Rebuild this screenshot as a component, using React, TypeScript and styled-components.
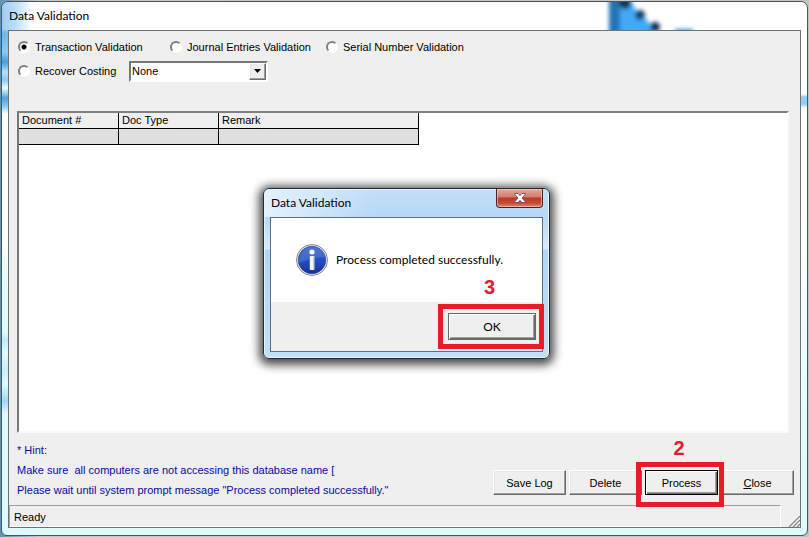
import React from "react";
import styled, { createGlobalStyle, css } from "styled-components";

const GlobalStyle = createGlobalStyle`
  * { box-sizing: border-box; }
  body {
    margin: 0;
    font-family: "Liberation Sans", Arial, sans-serif;
    font-size: 11px;
    line-height: 16px;
    color: #000;
  }
`;

const uiFont = `Lato, "Open Sans", sans-serif`;

const Desktop = styled.div`
  position: relative;
  display: flex;
  min-height: 100vh;
  padding: 1px;
  background: linear-gradient(90deg, #5d93b4 0, #c4c8ca 40px, #c4c4c4 100%);
`;

const Window = styled.main`
  position: relative;
  display: flex;
  flex: 1;
  flex-direction: column;
  padding: 0 6px 7px;
  border: 1px solid #4f5456;
  border-radius: 7px 7px 6px 6px;
  overflow: hidden;
  background:
    linear-gradient(transparent 92px, #8fcdf5 95px, #8fcdf5 102px, transparent 106px) right / 6px 100% no-repeat,
    linear-gradient(
      #9ccdf0 0, #cfe9fb 18px, #6cb8ee 32px, #8ccaf5 50px, #3f9fe4 60px, #b5dffb 70px,
      #8cc8f3 78px, #eefaff 86px, #4aa4e2 96px, #8cc8f3 104px, #fff 112px, #fff 240px,
      #e4fcfe 290px, #e0fbfe 330px, #bfeafd 338px, #e0fbfe 350px, #c6eefd 368px,
      #e0fbfe 382px, #9ed8f6 399px, #e0fbfe 412px, #e0fbfe 100%
    ) left / 6px 100% no-repeat,
    linear-gradient(#fff 0, #fff 200px, #e3fbfd 430px, #e0f9fb 100%);
`;

const TitleBar = styled.header`
  position: relative;
  display: flex;
  align-items: center;
  height: 28px;
  font: 12px/18px ${uiFont};
  background: linear-gradient(90deg, #9dccf0 0, #c4e2f8 16px, #fff 30px);
  margin-left: -6px;
  padding-left: 7px;
`;

const TitleText = styled.h1`
  margin: 0;
  font: inherit;
  position: relative;
`;

const Glow = styled.svg`
  position: absolute;
  left: 75%;
  top: 0;
  width: 100px;
  height: 28px;
`;

const Client = styled.div`
  display: flex;
  flex: 1;
  flex-direction: column;
  border: 1px solid #697378;
  background: #efefef;
`;

const Form = styled.form`
  display: flex;
  flex: 1;
  flex-direction: column;
  padding: 4px 11px 0 8px;
`;

const OptionRow = styled.div`
  display: flex;
  align-items: center;
  height: 24px;
  padding-left: 1px;
`;

const Option = styled.label<{ $width: number }>`
  display: flex;
  align-items: center;
  gap: 5px;
  width: ${(p) => p.$width}px;
  white-space: nowrap;
`;

const Radio = styled.input`
  appearance: none;
  flex: none;
  width: 12px;
  height: 12px;
  margin: 0;
  border: 2px solid;
  border-color: #808080 #fff #fff #808080;
  border-radius: 50%;
  background: #fff;
  &:checked {
    background: radial-gradient(circle, #000 0, #000 2px, #fff 3px);
  }
`;

const Combo = styled.div`
  position: relative;
  display: flex;
  width: 139px;
  height: 21px;
  border: 2px solid;
  border-color: #777 #fff #fff #777;
`;

const Select = styled.select`
  appearance: none;
  width: 100%;
  padding: 0 18px 0 1px;
  border: 0;
  border-radius: 0;
  background: #fff;
  color: #000;
  font: inherit;
`;

const bevel = css`
  border: 1px solid;
  border-color: #fff #696969 #696969 #fff;
  box-shadow: inset -1px -1px #a0a0a0, inset 1px 1px #e8e8e8;
  background: #efefef;
`;

const ComboArrow = styled.span`
  ${bevel}
  position: absolute;
  top: 0;
  right: 0;
  display: grid;
  place-items: center;
  width: 17px;
  height: 17px;
  pointer-events: none;
`;

const GridPanel = styled.section`
  flex: 1;
  margin-top: 28px;
  border: 2px solid;
  border-color: #808080 #fafafa #fafafa #777;
  background: #fff;
`;

const Table = styled.table`
  border-collapse: separate;
  border-spacing: 0;
  table-layout: fixed;
  width: 400px;
`;

const Th = styled.th<{ $width: number }>`
  width: ${(p) => p.$width}px;
  height: 16px;
  padding: 0 3px;
  border: solid #000;
  border-width: 0 1px 1px 0;
  background: #efefef;
  font-weight: 400;
  line-height: 15px;
  text-align: left;
`;

const Td = styled.td`
  height: 16px;
  padding: 0;
  border: solid #000;
  border-width: 0 1px 1px 0;
  background: #dfdfdf;
`;

const Footer = styled.div`
  display: flex;
  justify-content: space-between;
  height: 71px;
  padding-top: 7px;
  margin-right: -5px;
`;

const Hint = styled.div`
  color: #0a0a9c;
  p {
    margin: 0;
    line-height: 20px;
    white-space: pre;
  }
`;

const Actions = styled.div`
  display: flex;
  align-items: flex-start;
  gap: 3px;
  padding-top: 30px;
`;

const Slot = styled.div`
  position: relative;
  display: flex;
  align-self: flex-start;
`;

const Button = styled.button<{ $default?: boolean }>`
  ${bevel}
  width: 73px;
  height: 25px;
  padding: 0;
  color: #000;
  font: inherit;
  ${(p) =>
    p.$default &&
    css`
      border-color: #000;
      box-shadow: inset 1px 1px #fff, inset -1px -1px #696969, inset -2px -2px #a0a0a0;
    `}
`;

const Mark = styled.span<{ $inset: string }>`
  position: absolute;
  inset: ${(p) => p.$inset};
  z-index: 1;
  border: 5px solid #e81c24;
  pointer-events: none;
`;

const Step = styled.span<{ $gap: number }>`
  position: absolute;
  bottom: 100%;
  left: 0;
  right: 0;
  margin-bottom: ${(p) => p.$gap}px;
  padding-right: 5px;
  color: #d9202c;
  font: bold 20px/24px "Liberation Sans", Arial, sans-serif;
  text-align: center;
`;

const StatusBar = styled.footer`
  display: flex;
  align-items: flex-end;
  justify-content: space-between;
  height: 23px;
`;

const StatusText = styled.div`
  flex: 1;
  height: 22px;
  margin-right: 7px;
  padding-left: 4px;
  border: 1px solid;
  border-color: #a0a0a0 #fff #fff #a0a0a0;
  line-height: 22px;
`;

const Overlay = styled.div`
  position: absolute;
  inset: 0;
  display: grid;
  place-items: center;
  padding: 10px 0 0 4px;
`;

const Dialog = styled.section`
  width: 287px;
  padding: 0 6px 6px;
  border: 1px solid #1d2a38;
  border-radius: 6px;
  background: linear-gradient(90deg, #e3f1fd, rgba(227, 241, 253, 0) 110px) top / 100% 28px no-repeat,
    linear-gradient(#c3dff8 0, #b7d8f7 27px, #d9ebfa 60px, #b3d5f5 61px, #c2e0f8 100%);
  box-shadow: inset 0 0 0 1px #e6f4ff, 0 2px 10px 4px rgba(0, 0, 0, 0.7);
  font: 12px/18px ${uiFont};
`;

const DialogTitle = styled.header`
  display: flex;
  align-items: flex-start;
  justify-content: space-between;
  height: 28px;
  padding-left: 1px;
  h2 {
    margin: 5px 0 0;
    font: inherit;
  }
`;

const CloseButton = styled.button`
  display: grid;
  place-items: center;
  width: 47px;
  height: 19px;
  padding: 0;
  border: 1px solid #4a2030;
  border-top: 0;
  border-radius: 0 0 4px 4px;
  background: linear-gradient(#e5aa9f 0, #d07c6c 8px, #b93a27 9px, #c54a35 14px, #dc8a72 100%);
  box-shadow: inset 0 0 0 1px rgba(255, 210, 200, 0.55);
`;

const DialogClient = styled.div`
  border: 1px solid #5b7088;
  background: #fff;
`;

const Message = styled.div`
  display: flex;
  align-items: center;
  gap: 7px;
  height: 84px;
  padding-left: 24px;
  p {
    margin: 0;
  }
`;

const DialogActions = styled.div`
  display: flex;
  justify-content: flex-end;
  height: 49px;
  padding: 11px 6px 0;
  background: #efefef;
`;

const OkButton = styled(Button)`
  width: 88px;
  height: 27px;
  border-color: #696969;
`;

const columns = [
  { title: "Document #", width: 100 },
  { title: "Doc Type", width: 100 },
  { title: "Remark", width: 200 },
];

const InfoIcon = () => (
  <svg width="34" height="34" viewBox="0 0 34 34" aria-hidden="true">
    <defs>
      <linearGradient id="ball" x1="0" y1="0" x2="0" y2="1">
        <stop offset="0" stopColor="#3b62c4" />
        <stop offset="0.5" stopColor="#2450bd" />
        <stop offset="1" stopColor="#1a2f9e" />
      </linearGradient>
    </defs>
    <circle cx="17" cy="17" r="15.5" fill="#f4f4f4" stroke="#858585" />
    <circle cx="17" cy="17" r="13.8" fill="url(#ball)" stroke="#24388c" strokeWidth="0.6" />
    <path d="M4 20C3 11 9 4 17 4s13 5 13 10c-9 0-18 2-26 6z" fill="#6c8fdc" opacity="0.4" />
    <circle cx="17" cy="9" r="2.6" fill="#fff" />
    <rect x="14.8" y="13" width="4.6" height="14" rx="0.8" fill="#f5f5f5" />
    <path d="M18.6 13.5v13" stroke="#bcc6dc" />
  </svg>
);

export default function App() {
  return (
    <Desktop>
      <GlobalStyle />
      <Window>
        <TitleBar>
          <Glow viewBox="0 0 100 28" aria-hidden="true">
            <defs>
              <filter id="soft" filterUnits="userSpaceOnUse" x="-10" y="-20" width="120" height="70">
                <feGaussianBlur stdDeviation="2" />
              </filter>
            </defs>
            <g filter="url(#soft)">
              <path d="M9-12h15l11 20 13 12 6 20H9z" fill="#45a8f8" />
              <path d="M8-12h11v52H8z" fill="#2373b2" />
              <circle cx="24" cy="1" r="6" fill="#12304f" />
              <circle cx="39" cy="13" r="5" fill="#123a62" />
              <circle cx="54" cy="25" r="5" fill="#0f2f50" />
              <path d="M74 27h18v6H74z" fill="#3d9be0" />
            </g>
          </Glow>
          <TitleText>Data Validation</TitleText>
        </TitleBar>
        <Client>
          <Form onSubmit={(e) => e.preventDefault()}>
            <OptionRow>
              <Option $width={152}>
                <Radio type="radio" name="task" defaultChecked />
                Transaction Validation
              </Option>
              <Option $width={156}>
                <Radio type="radio" name="task" />
                Journal Entries Validation
              </Option>
              <Option $width={156}>
                <Radio type="radio" name="task" />
                Serial Number Validation
              </Option>
            </OptionRow>
            <OptionRow>
              <Option $width={111}>
                <Radio type="radio" name="task" />
                Recover Costing
              </Option>
              <Combo>
                <Select aria-label="Recover costing method">
                  <option>None</option>
                </Select>
                <ComboArrow>
                  <svg width="7" height="4" viewBox="0 0 7 4" aria-hidden="true">
                    <path d="M0 0h7L3.5 4z" />
                  </svg>
                </ComboArrow>
              </Combo>
            </OptionRow>
            <GridPanel>
              <Table>
                <thead>
                  <tr>
                    {columns.map((c) => (
                      <Th key={c.title} $width={c.width} scope="col">
                        {c.title}
                      </Th>
                    ))}
                  </tr>
                </thead>
                <tbody>
                  <tr>
                    {columns.map((c) => (
                      <Td key={c.title} />
                    ))}
                  </tr>
                </tbody>
              </Table>
            </GridPanel>
            <Footer>
              <Hint>
                <p>* Hint:</p>
                <p>Make sure{"  "}all computers are not accessing this database name [</p>
                <p>Please wait until system prompt message "Process completed successfully."</p>
              </Hint>
              <Actions>
                <Button type="button">Save Log</Button>
                <Button type="button">Delete</Button>
                <Slot>
                  <Button type="submit" $default>
                    Process
                  </Button>
                  <Mark $inset="-8px -6px -12px -9px" />
                  <Step $gap={10}>2</Step>
                </Slot>
                <Button type="button">
                  <u>C</u>lose
                </Button>
              </Actions>
            </Footer>
          </Form>
          <StatusBar>
            <StatusText>Ready</StatusText>
            <svg width="12" height="12" viewBox="0 0 12 12" aria-hidden="true">
              <path d="M1 12L12 1M5 12l7-7M9 12l3-3" stroke="#8c8c8c" strokeWidth="1.4" />
              <path d="M0 11L11 0M4 11l8-8M8 11l4-4" stroke="#fff" strokeWidth="0.6" />
            </svg>
          </StatusBar>
        </Client>
      </Window>
      <Overlay>
        <Dialog role="dialog" aria-labelledby="dialog-title">
          <DialogTitle>
            <h2 id="dialog-title">Data Validation</h2>
            <CloseButton type="button" aria-label="Close dialog">
              <svg width="12" height="10" viewBox="0 0 12 10" aria-hidden="true">
                <path
                  d="M1 .5h3l2 2.2L8 .5h3v1L8 5l3 3.5v1H8L6 7.3 4 9.5H1v-1L4 5 1 1.5z"
                  fill="#fff"
                  stroke="#5d5063"
                  strokeWidth="0.9"
                />
              </svg>
            </CloseButton>
          </DialogTitle>
          <DialogClient>
            <Message>
              <InfoIcon />
              <p>Process completed successfully.</p>
            </Message>
            <DialogActions>
              <Slot>
                <OkButton type="button" $default>
                  OK
                </OkButton>
                <Mark $inset="-9px -8px -9px -10px" />
                <Step $gap={14}>3</Step>
              </Slot>
            </DialogActions>
          </DialogClient>
        </Dialog>
      </Overlay>
    </Desktop>
  );
}
